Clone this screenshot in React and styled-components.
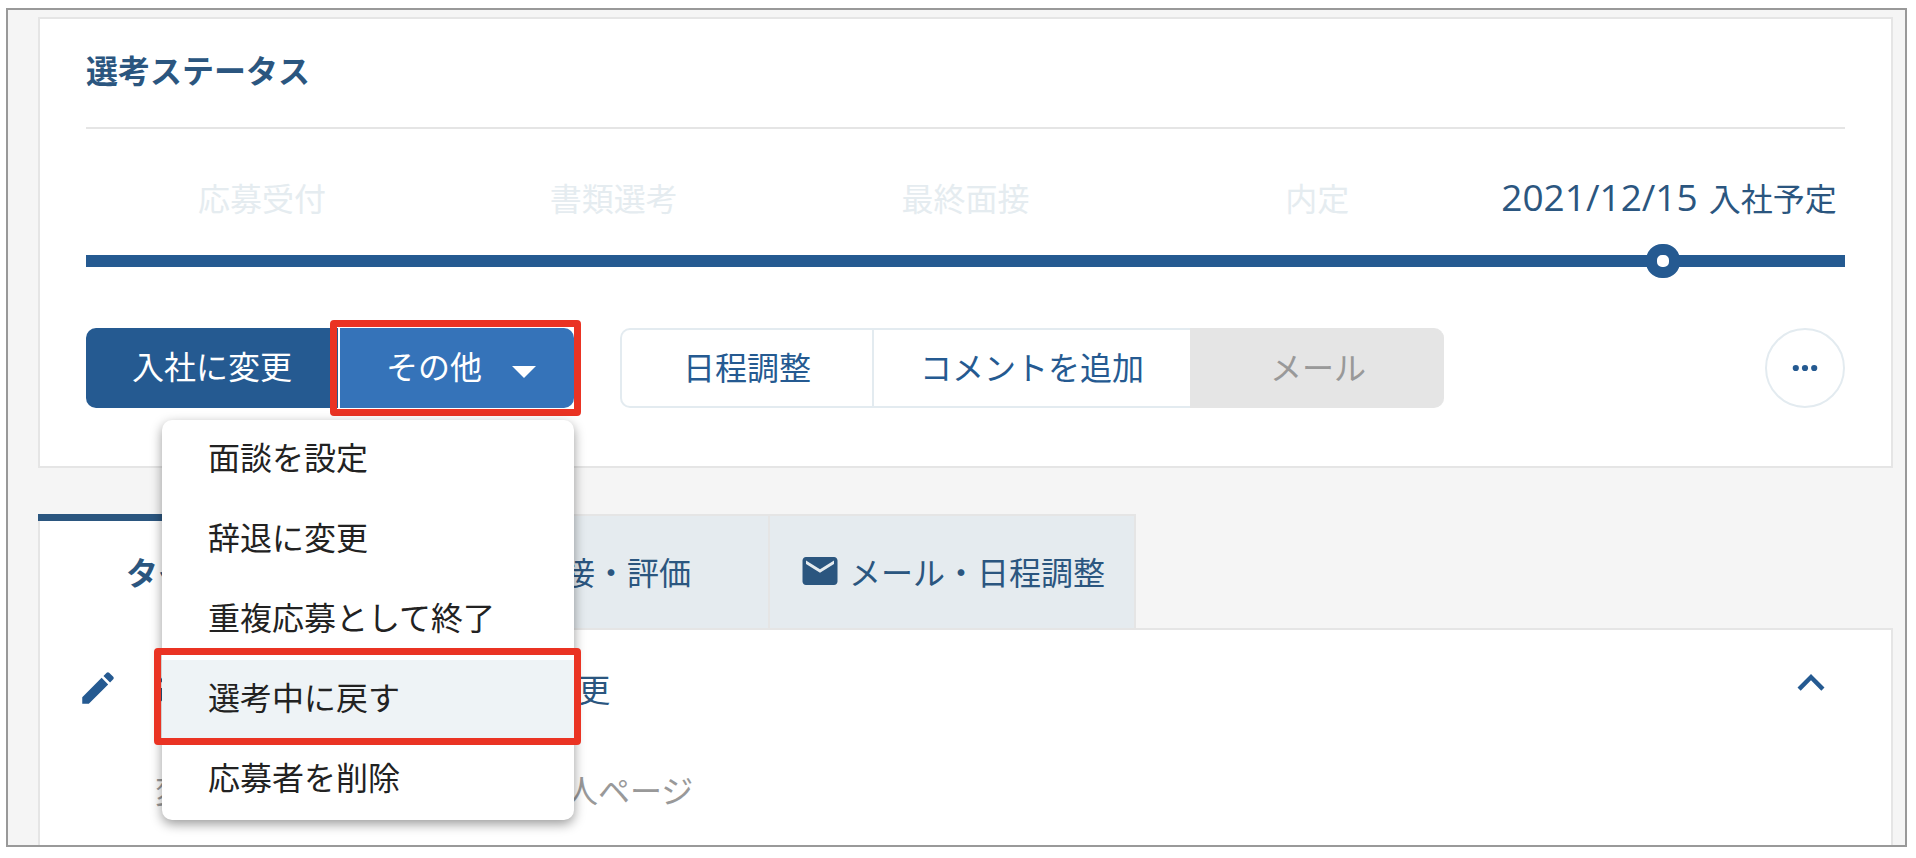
import React from 'react';
import styled, { createGlobalStyle } from 'styled-components';
import { MdEdit, MdEmail, MdExpandLess } from 'react-icons/md';

const steps = ['応募受付', '書類選考', '最終面接', '内定'];

const menuItems = [
  '面談を設定',
  '辞退に変更',
  '重複応募として終了',
  '選考中に戻す',
  '応募者を削除',
];

const OtherMenu = () => (
  <Menu role="menu">
    {menuItems.map(item => (
      <li key={item} role="none">
        <MenuItem role="menuitem" $active={item === '選考中に戻す'}>
          {item}
          {item === '選考中に戻す' && <ItemMarker />}
        </MenuItem>
      </li>
    ))}
  </Menu>
);

const StatusCard = () => (
  <Card>
    <CardTitle>選考ステータス</CardTitle>

    <Steps>
      {steps.map(step => <Step key={step}>{step}</Step>)}
      <Step $current><StepDate>2021/12/15</StepDate> 入社予定</Step>
    </Steps>
    <Track><Dot /></Track>

    <Toolbar>
      <PrimaryButton>入社に変更</PrimaryButton>
      <Dropdown>
        <OtherButton aria-haspopup="menu" aria-expanded="true">
          その他
          <svg width="24" height="26" viewBox="0 0 24 26" aria-hidden="true">
            <path d="M0 14h24L12 26z" fill="currentColor" />
          </svg>
        </OtherButton>
        <ButtonMarker />
        <OtherMenu />
      </Dropdown>
      <ButtonGroup>
        <GroupButton $pad={61}>日程調整</GroupButton>
        <GroupButton $pad={46}>コメントを追加</GroupButton>
        <GroupButton $pad={78} disabled>メール</GroupButton>
      </ButtonGroup>
      <MoreButton aria-label="メニュー">
        <svg width="26" height="8" viewBox="0 0 26 8" aria-hidden="true">
          <g fill="currentColor">
            <circle cx="3.8" cy="4" r="3.1" />
            <circle cx="13" cy="4" r="3.1" />
            <circle cx="22.2" cy="4" r="3.1" />
          </g>
        </svg>
      </MoreButton>
    </Toolbar>
  </Card>
);

const Timeline = () => (
  <section>
    <Tabs role="tablist">
      <Tab role="tab" aria-selected="true" $active>タイムライン</Tab>
      <Tab role="tab" aria-selected="false"><MdEmail size={42} />面接・評価</Tab>
      <Tab role="tab" aria-selected="false"><MdEmail size={42} />メール・日程調整</Tab>
    </Tabs>
    <TimelineBody>
      <EntryIcon><MdEdit size={42} /></EntryIcon>
      <Entry>
        <EntryTitle>選考ステップを 入社予定に変更</EntryTitle>
        <EntryMeta>変更者：採用担当 / 応募者個人ページ</EntryMeta>
      </Entry>
      <ToggleButton aria-label="閉じる"><MdExpandLess size={54} /></ToggleButton>
    </TimelineBody>
  </section>
);

class App extends React.Component {

  render(){
    return(
      <>
        <GlobalStyle />
        <Frame>
          <StatusCard />
          <Timeline />
        </Frame>
      </>
    )
  }
};

const GlobalStyle = createGlobalStyle`
  * {
    box-sizing: border-box;
  }
  body {
    margin: 0;
    padding: 8px 9px 11px 6px;
    background-color: #ffffff;
    font-family: "Noto Sans CJK JP", sans-serif;
    font-size: 32px;
    line-height: 48px;
  }
  button {
    margin: 0;
    padding: 0;
    border: 0;
    background: none;
    font: inherit;
    color: inherit;
    white-space: nowrap;
    cursor: pointer;
  }
`
const Frame = styled.main`
  border: 2px solid #999999;
  padding: 7px 12px 0 30px;
  background-color: #f5f5f5;
`
const Card = styled.section`
  border: 2px solid #e5e5e5;
  padding: 26px 46px 58px;
  margin-bottom: 46px;
  background-color: #ffffff;
`
const CardTitle = styled.h2`
  margin: 0;
  padding-bottom: 34px;
  border-bottom: 2px solid #e5e5e5;
  font-size: 32px;
  font-weight: 700;
  color: #2b567f;
`
const Steps = styled.div`
  display: grid;
  grid-template-columns: repeat(5, minmax(0, 1fr));
  padding: 44px 0 34px;
`
const Step = styled.div`
  text-align: center;
  white-space: nowrap;
  color: ${props => props.$current ? '#2b567f' : '#e5ecf0'};
`
const StepDate = styled.span`
  margin-right: 4px;
  font-family: "Open Sans", sans-serif;
  font-size: 37px;
  line-height: 32px;
`
const Track = styled.div`
  position: relative;
  height: 12px;
  background-color: #255a91;
`
const Dot = styled.span`
  position: absolute;
  top: 50%;
  left: calc(90% - 6px);
  width: 34px;
  height: 34px;
  border: 11px solid #255a91;
  border-radius: 16px;
  background-color: #ffffff;
  transform: translate(-50%, -50%);
`
const Toolbar = styled.div`
  display: flex;
  margin-top: 61px;
`
const PrimaryButton = styled.button`
  height: 80px;
  padding: 0 46px 6px;
  border-radius: 10px 0 0 10px;
  background-color: #255a91;
  color: #ffffff;
`
const Dropdown = styled.div`
  position: relative;
  margin: 0 46px 0 2px;
`
const OtherButton = styled.button`
  display: flex;
  align-items: center;
  gap: 30px;
  height: 80px;
  padding: 0 38px 6px 46px;
  border-radius: 0 10px 10px 0;
  background-color: #3573b9;
  color: #ffffff;
`
const Marker = styled.span`
  position: absolute;
  border: 7px solid #ea3323;
  border-radius: 4px;
  pointer-events: none;
`
const ButtonMarker = styled(Marker)`
  inset: -8px -7px -8px -10px;
`
const ItemMarker = styled(Marker)`
  inset: -12px -7px -5px -8px;
`
const Menu = styled.ul`
  position: absolute;
  top: calc(100% + 12px);
  right: 0;
  z-index: 1;
  width: 412px;
  margin: 0;
  padding: 0;
  border-radius: 10px;
  background-color: #ffffff;
  box-shadow: 0 4px 12px rgba(0,0,0,0.4);
  list-style: none;
`
const MenuItem = styled.button`
  position: relative;
  z-index: ${props => props.$active ? 1 : 0};
  display: block;
  width: 100%;
  height: 80px;
  padding: 0 46px 8px;
  background-color: ${props => props.$active ? '#eef3f6' : 'transparent'};
  text-align: left;
  color: #222222;
`
const ButtonGroup = styled.div`
  display: flex;
`
const GroupButton = styled.button`
  height: 80px;
  padding: 0 ${props => props.$pad}px 4px;
  border: 2px solid #e3ebf0;
  border-right-width: 0;
  color: #255a91;

  &:first-child {
    border-radius: 10px 0 0 10px;
  }
  &:last-child {
    border-radius: 0 10px 10px 0;
  }
  &:disabled {
    border-color: #e5e5e5;
    background-color: #e5e5e5;
    color: #999999;
  }
`
const MoreButton = styled.button`
  display: flex;
  align-items: center;
  justify-content: center;
  width: 80px;
  height: 80px;
  margin-left: auto;
  border: 2px solid #e3ebf0;
  border-radius: 50%;
  color: #255a91;
`
const Tabs = styled.div`
  display: flex;
  margin-bottom: -2px;
`
const Tab = styled.button`
  position: relative;
  display: flex;
  align-items: center;
  justify-content: center;
  gap: 8px;
  flex: 0 0 366px;
  height: 116px;
  padding-bottom: 2px;
  border: 2px solid #e5e5e5;
  border-left-width: 0;
  background-color: #e5ebef;
  color: #2b567f;

  ${props => props.$active && `
    border: 0;
    background-color: #ffffff;
    box-shadow: inset 0 7px #2b567f, inset 2px 0 #e5e5e5, inset -2px 0 #e5e5e5;
    font-weight: 700;
  `}
`
const TimelineBody = styled.div`
  display: flex;
  align-items: flex-start;
  border: 2px solid #e5e5e5;
  border-bottom: 0;
  padding: 34px 53px 32px 37px;
  background-color: #ffffff;
`
const EntryIcon = styled.span`
  display: flex;
  align-items: center;
  height: 48px;
  margin-right: 36px;
  color: #255a91;
`
const Entry = styled.article`
  flex: 1;
`
const EntryTitle = styled.h3`
  margin: 0;
  font-size: 32px;
  font-weight: 400;
  color: #2b567f;
`
const EntryMeta = styled.p`
  margin: 53px 0 0;
  color: #999999;
`
const ToggleButton = styled.button`
  display: flex;
  align-items: center;
  height: 38px;
  color: #255a91;
`

export default App;
